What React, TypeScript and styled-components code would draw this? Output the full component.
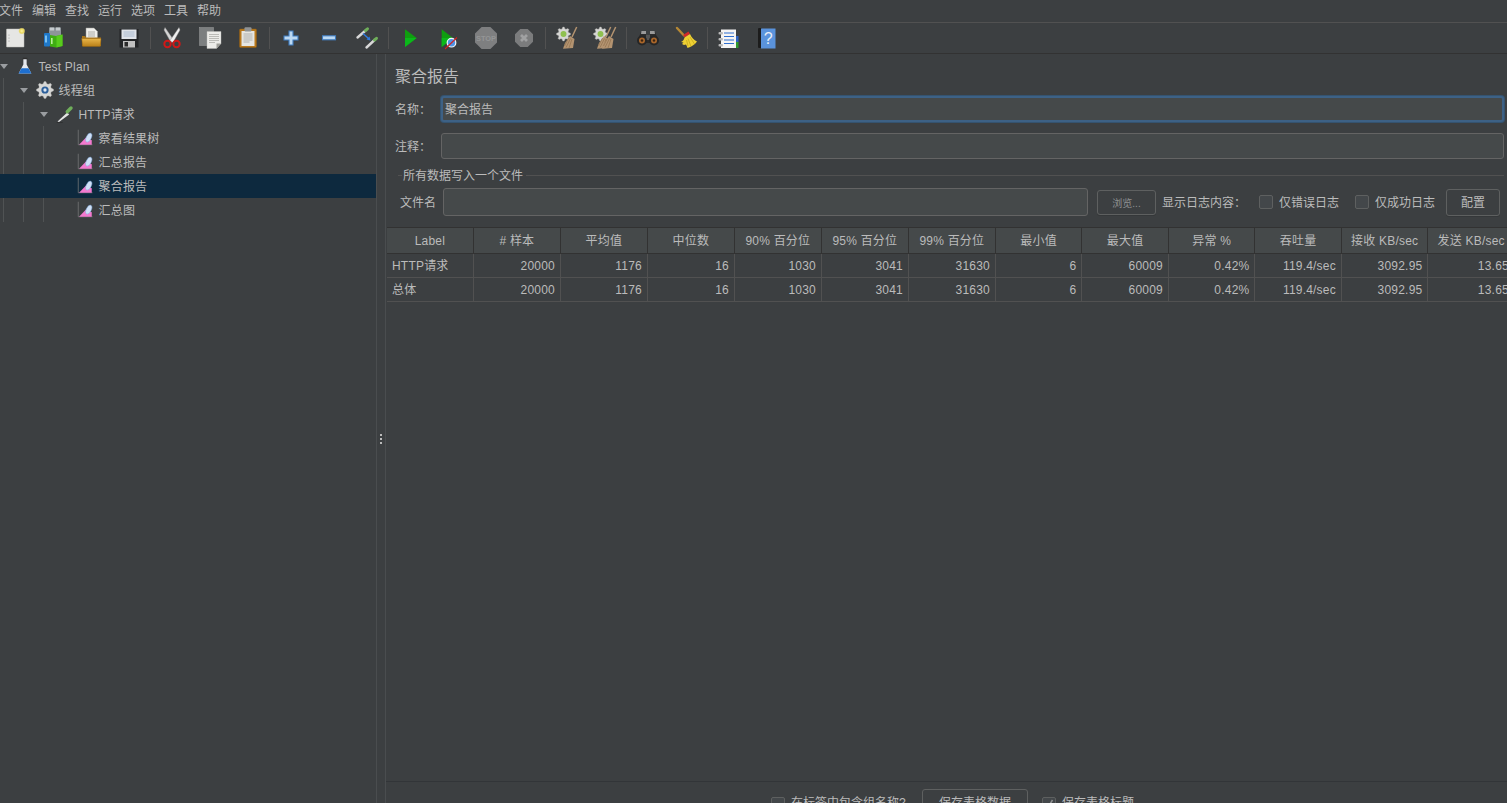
import React, { FC } from 'react'
import styled, { createGlobalStyle } from 'styled-components'

const GlobalStyle = createGlobalStyle`
  html, body {
    margin: 0;
    padding: 0;
    background: #3c3f41;
  }
  * {
    box-sizing: border-box;
  }
`

const APP = styled.div`
  width: 1507px;
  height: 803px;
  overflow: hidden;
  display: flex;
  flex-direction: column;
  background: #3c3f41;
  color: #bbbbbb;
  font-family: 'Liberation Sans', 'Noto Sans CJK SC', sans-serif;
  font-size: 12px;
  line-height: 15px;
`

const MENU = styled.div`
  display: flex;
  height: 23px;
  flex: none;
  padding-top: 4px;
  border-bottom: 1px solid #515151;
`

const MENU_ITEM = styled.div`
  width: 33px;
  &:first-child {
    margin-left: -1px;
  }
`

const TOOLBAR = styled.div`
  display: flex;
  align-items: center;
  height: 31px;
  flex: none;
  border-bottom: 1px solid #323232;
`

const TOOL = styled.div`
  width: 38px;
  height: 24px;
  flex: none;
  display: flex;
  justify-content: center;
  &:first-child {
    margin-left: -4px;
  }
  svg {
    width: 24px;
    height: 24px;
    display: block;
  }
`

const TOOL_SEP = styled.div`
  width: 5px;
  height: 22px;
  flex: none;
  background: linear-gradient(#515151, #515151) no-repeat center / 1px 100%;
`

const BODY = styled.div`
  flex: 1;
  display: flex;
  min-height: 0;
`

const TREE = styled.div`
  width: 376px;
  flex: none;
`

const guideLayers = (guides: number[]) =>
  guides.length
    ? guides.map(x => `linear-gradient(#505354, #505354) no-repeat ${x}px 0 / 1px 100%`).join(', ')
    : 'none'

const ROW = styled.div<{ $depth: number; $guides: number[]; $selected?: boolean }>`
  display: flex;
  align-items: center;
  height: 24px;
  padding-left: ${({ $depth }) => $depth * 20}px;
  background: ${({ $selected, $guides }) => ($selected ? '#0d293e' : guideLayers($guides))};
  svg {
    width: 18px;
    height: 18px;
    flex: none;
    margin-right: 4.5px;
  }
`

const ARROW = styled.span<{ $open?: boolean }>`
  width: 0;
  height: 0;
  flex: none;
  margin-right: 8px;
  border-left: 4px solid transparent;
  border-right: 4px solid transparent;
  border-top: 5px solid ${({ $open }) => ($open ? '#9a9da0' : 'transparent')};
`

const ROW_LABEL = styled.span`
  white-space: nowrap;
  letter-spacing: 0.2px;
  padding-top: 2px;
`

const SPLITTER = styled.div`
  width: 10px;
  flex: none;
  display: flex;
  flex-direction: column;
  align-items: center;
  justify-content: center;
  gap: 2px;
  padding-top: 20px;
  border-left: 1px solid #4a4d4f;
  border-right: 1px solid #4a4d4f;
  span {
    width: 2px;
    height: 2px;
    background: #bbbbbb;
  }
`

const PANEL = styled.div`
  flex: 1;
  min-width: 0;
  display: flex;
  flex-direction: column;
`

const TITLE = styled.div`
  height: 42px;
  flex: none;
  padding: 4px 0 0 9px;
  display: flex;
  align-items: center;
  font-size: 16px;
  line-height: 20px;
`

const FORM_ROW = styled.div<{ $gapBelow?: number }>`
  display: flex;
  align-items: center;
  height: 26px;
  flex: none;
  padding: 0 3px 0 9px;
  margin-bottom: ${({ $gapBelow }) => $gapBelow ?? 0}px;
`

const FORM_LABEL = styled.label`
  width: 46px;
  flex: none;
  padding-top: 2px;
`

const FIELD = styled.div<{ $focused?: boolean }>`
  flex: 1;
  height: 100%;
  padding: 2px 0 0 ${({ $focused }) => ($focused ? 2 : 4)}px;
  display: flex;
  align-items: center;
  background: #45494a;
  border: ${({ $focused }) => ($focused ? '2px solid #3d6185' : '1px solid #646464')};
  border-radius: 3px;
  box-shadow: ${({ $focused }) => ($focused ? '0 0 0 1px #35536f' : 'none')};
`

const GROUP_TITLE = styled.div`
  height: 14px;
  flex: none;
  margin: 9px 3px 6px 12px;
  display: flex;
  align-items: center;
  &::before {
    content: '';
    width: 4px;
    height: 1px;
    background: #515151;
    margin-right: 1px;
  }
  &::after {
    content: '';
    flex: 1;
    height: 1px;
    background: #515151;
    margin-left: 3px;
  }
`

const GROUP_TEXT = styled.span`
  padding-top: 2px;
`

const FILE_ROW = styled.div`
  height: 28px;
  flex: none;
  display: flex;
  align-items: center;
  padding-left: 14px;
`

const FILE_LABEL = styled.label`
  width: 43px;
  flex: none;
  padding-top: 2px;
`

const FILE_FIELD = styled(FIELD)`
  flex: none;
  width: 645px;
  margin-right: 9px;
`

const BROWSE = styled.div`
  width: 59px;
  height: 25px;
  flex: none;
  margin-right: 6px;
  padding-top: 2px;
  display: flex;
  align-items: center;
  justify-content: center;
  font-size: 10px;
  color: #8f9192;
  border: 1px solid #5e6060;
  border-radius: 3px;
  box-shadow: 0 1px 0 #35383a;
`

const CHECK_BOX = styled.span`
  width: 14px;
  height: 14px;
  flex: none;
  display: inline-flex;
  align-items: center;
  justify-content: center;
  background: #43474a;
  border: 1px solid #5e6060;
  border-radius: 2px;
  svg {
    width: 12px;
    height: 12px;
  }
`

const CHECK_ITEM = styled.div<{ $width: number }>`
  width: ${({ $width }) => $width}px;
  flex: none;
  display: flex;
  align-items: center;
  gap: 6px;
  white-space: nowrap;
`

const CHECK_TEXT = styled.span`
  padding-top: 2px;
`

const LOG_LABEL = styled.span`
  width: 97px;
  flex: none;
  padding-top: 2px;
`

const PLAIN_BUTTON = styled.div`
  width: 54px;
  height: 27px;
  flex: none;
  padding-top: 2px;
  display: flex;
  align-items: center;
  justify-content: center;
  border: 1px solid #5e6060;
  border-radius: 3px;
  box-shadow: 0 1px 0 #35383a;
`

const TABLE_WRAP = styled.div`
  margin: 11px 0 0 1px;
  flex: none;
  overflow: hidden;
`

const TABLE = styled.table`
  border-collapse: collapse;
  table-layout: fixed;
  width: 1127.4px;
  th, td {
    padding: 2px 5px 0;
    border-right: 1px solid #515151;
    border-bottom: 1px solid #515151;
    font-weight: normal;
    white-space: nowrap;
    letter-spacing: 0.2px;
  }
  th {
    width: 86.5px;
    height: 26px;
    background: #45494a;
    border-top: 1px solid #323232;
    border-bottom-color: #323232;
    border-right-color: #323232;
    text-align: center;
    overflow: hidden;
  }
  th:nth-child(-n + 7) {
    width: 87px;
  }
  th:first-child {
    width: 86.4px;
  }
  td {
    height: 24px;
    text-align: right;
  }
  td:first-child {
    text-align: left;
  }
`

const SPACER = styled.div`
  flex: 1;
`

const FOOTER = styled.div`
  height: 22px;
  flex: none;
  display: flex;
  align-items: flex-start;
  padding: 7px 0 0 385px;
  border-top: 1px solid #323538;
`

const FOOT_CHECK = styled(CHECK_ITEM)`
  margin-top: 7px;
  ${CHECK_TEXT} {
    padding-top: 0;
  }
`

const FOOT_BUTTON = styled(PLAIN_BUTTON)`
  width: 106px;
  height: 27px;
  margin-right: 14px;
`

type Props = { children?: React.ReactNode }

const Ico: FC<Props> = ({ children }) => <svg viewBox="0 0 24 24">{children}</svg>

const NewIcon = () => (
  <Ico>
    <defs>
      <radialGradient id="glow">
        <stop offset="0" stopColor="#fff6a8" />
        <stop offset="0.6" stopColor="#e8d65c" />
        <stop offset="1" stopColor="#e8d65c" stopOpacity="0" />
      </radialGradient>
    </defs>
    <rect x="3.5" y="3" width="17.5" height="18" rx="0.5" fill="#e6e6e4" stroke="#bdbdb8" strokeWidth="0.5" />
    <circle cx="6" cy="9" r="0.6" fill="#999" />
    <circle cx="6" cy="12" r="0.6" fill="#999" />
    <circle cx="6" cy="15" r="0.6" fill="#999" />
    <circle cx="18.8" cy="5" r="3.6" fill="url(#glow)" />
  </Ico>
)

const TemplatesIcon = () => (
  <Ico>
    <rect x="8" y="1.5" width="12" height="11" fill="#8d9599" />
    <path d="M9 1.5h4v3H9zM15 1.5h4v3h-4z" fill="#c5cbce" />
    <rect x="3" y="7" width="6" height="13.5" rx="1" fill="#1f78c8" />
    <rect x="4" y="9.5" width="2" height="7" fill="#7bc0f0" />
    <path d="M9 9l6 1 6.5-1.5V20l-6.5 1.5-6-1z" fill="#3fae12" />
    <path d="M15.5 10l6-1.5V20l-6 1.5z" fill="#58cc1c" />
    <rect x="10" y="12" width="1.6" height="6" fill="#b7ee9a" />
  </Ico>
)

const OpenIcon = () => (
  <Ico>
    <defs>
      <linearGradient id="folder" x1="0" y1="0" x2="0" y2="1">
        <stop offset="0" stopColor="#e9b64a" />
        <stop offset="1" stopColor="#b97f17" />
      </linearGradient>
    </defs>
    <path d="M7 2h8l3.5 3.5V14H7z" fill="#efefec" stroke="#9a9a94" strokeWidth="0.5" />
    <path d="M9 6h7M9 8h7M9 10h7" stroke="#9c9c98" strokeWidth="0.8" />
    <path d="M3 10h3l1 1.5h15V20H3z" fill="#a8751a" />
    <path d="M2.7 12.5h19.3l-0.8 8H3.700z" fill="url(#folder)" stroke="#946512" strokeWidth="0.5" />
  </Ico>
)

const SaveIcon = () => (
  <Ico>
    <path d="M2.5 3h19v18.5h-19z" fill="#232527" />
    <rect x="4.5" y="3.5" width="15" height="9.5" fill="#dfe3e9" />
    <path d="M6.5 6h11M6.5 8h11M6.5 10h11" stroke="#9db0c8" strokeWidth="0.8" />
    <rect x="6" y="15" width="12" height="6.5" fill="#c0c0c0" />
    <rect x="7.5" y="16" width="3.5" height="4.5" fill="#2a2a2a" />
  </Ico>
)

const CutIcon = () => (
  <Ico>
    <path d="M5 1.5l9 13-3 2L4 4z" fill="#d4d4d4" stroke="#8a8a8a" strokeWidth="0.4" />
    <path d="M19 1.5l-9 13 3 2L20 4z" fill="#efefef" stroke="#8a8a8a" strokeWidth="0.4" />
    <circle cx="7.5" cy="18" r="3.2" fill="none" stroke="#d01818" strokeWidth="2" />
    <circle cx="16.5" cy="18" r="3.2" fill="none" stroke="#d01818" strokeWidth="2" />
  </Ico>
)

const CopyIcon = () => (
  <Ico>
    <rect x="1.5" y="1.5" width="14" height="18" fill="#7c7f80" stroke="#9a9c9c" strokeWidth="0.5" />
    <path d="M9 5.5h14v12l-4.5 5H9z" fill="#ecece9" stroke="#bdbdb8" strokeWidth="0.4" />
    <path d="M18.5 22.5v-5H23z" fill="#9f9f9a" />
    <path d="M11 8.5h10M11 10.5h10M11 12.5h10M11 14.5h10M11 16.5h6" stroke="#a6a6a2" strokeWidth="0.7" />
  </Ico>
)

const PasteIcon = () => (
  <Ico>
    <rect x="3.5" y="3" width="17" height="18.5" rx="1" fill="#b9791d" stroke="#8f5c12" strokeWidth="0.5" />
    <rect x="5.5" y="5" width="13" height="15" fill="#e6e6e2" />
    <rect x="8.5" y="1.2" width="7" height="4.3" rx="1" fill="#8f9294" />
    <path d="M7.5 8h9M7.5 10h9M7.5 12h9M7.5 14h9M7.5 16h6" stroke="#999" strokeWidth="0.7" />
  </Ico>
)

const PlusIcon = () => (
  <Ico>
    <path d="M10 5h4v5h5v4h-5v5h-4v-5H5v-4h5z" fill="#bcd9f3" stroke="#3f7cc0" strokeWidth="1.1" />
  </Ico>
)

const MinusIcon = () => (
  <Ico>
    <rect x="5.5" y="9.8" width="13" height="4" fill="#bcd9f3" stroke="#3f7cc0" strokeWidth="1.1" />
  </Ico>
)

const Dropper: FC<{ d: string; tip: string }> = ({ d, tip }) => (
  <>
    <path d={d} stroke="#d8d8d8" strokeWidth="2.4" strokeLinecap="round" fill="none" />
    <path d={tip} stroke="#6fae5a" strokeWidth="3" strokeLinecap="round" fill="none" />
  </>
)

const ToggleIcon = () => (
  <Ico>
    <Dropper d="M2.5 11.5L10 5" tip="M10.5 4.5L12.5 2.8" />
    <Dropper d="M11.5 21.5L19 14.5" tip="M19.5 14L21.5 12.3" />
    <path d="M8 7.5l5.5 5" stroke="#2f7be0" strokeWidth="1.4" />
    <path d="M15.5 14.5l-1-4-3 3z" fill="#2f7be0" />
  </Ico>
)

const RunIcon = () => (
  <Ico>
    <path d="M7 3.3L18.7 12 7 21z" fill="#0f9e0f" />
    <path d="M7 12h11.7L7 21z" fill="#0bb81a" />
  </Ico>
)

const RunNoTimersIcon = () => (
  <Ico>
    <path d="M5.7 3.3L17 12 5.7 21z" fill="#0f9e0f" />
    <path d="M5.7 12H17L5.7 21z" fill="#0bb81a" />
    <circle cx="15.5" cy="16.7" r="4.3" fill="#4f94e6" stroke="#f2f6fb" strokeWidth="1.2" />
    <path d="M9 23L21 11.5" stroke="#d42020" strokeWidth="1.1" />
  </Ico>
)

const StopIcon = () => (
  <Ico>
    <path d="M7.6 1h8.8L23 7.6v8.8L16.4 23H7.6L1 16.4V7.6z" fill="#7e7f80" />
    <text x="12" y="14.7" textAnchor="middle" fontSize="7.4" fontWeight="bold" fontFamily="Liberation Sans" fill="#949596">
      STOP
    </text>
  </Ico>
)

const ShutdownIcon = () => (
  <Ico>
    <path d="M8.3 3h7.4l5.3 5.3v7.4L15.7 21H8.3L3 15.7V8.3z" fill="#7b7c7d" />
    <path d="M9 9l6 6M15 9l-6 6" stroke="#a0a1a2" strokeWidth="2.8" />
  </Ico>
)

// outline of a toothed wheel
const gearPath = (cx: number, cy: number, r: number, teeth: number) => {
  const step = (Math.PI * 2) / (teeth * 4)
  const points: string[] = []
  for (let i = 0; i < teeth * 4; i++) {
    const radius = i % 4 < 2 ? r : r * 0.76
    const a = (i - 0.5) * step
    points.push(`${(cx + radius * Math.cos(a)).toFixed(2)} ${(cy + radius * Math.sin(a)).toFixed(2)}`)
  }
  return `M${points.join('L')}z`
}

const Gear: FC<{ cx: number; cy: number; r: number; hub: string }> = ({ cx, cy, r, hub }) => (
  <>
    <path d={gearPath(cx, cy, r, 8)} fill="#d6d6d4" stroke="#a8a8a6" strokeWidth="0.4" />
    <circle cx={cx} cy={cy} r={r * 0.42} fill={hub} />
  </>
)

const Broom: FC<{ x: number }> = ({ x }) => (
  <g transform={`translate(${x} 0)`}>
    <path d="M21.7 1L17 11" stroke="#b39370" strokeWidth="1.5" />
    <path d="M15 10l4.5 3L18 22l-10 .8 2-5.800z" fill="#b39370" />
    <path d="M11 21.5l4.5-9M14 22l3-9M9.5 20l4-8" stroke="#8c6b48" strokeWidth="0.6" />
  </g>
)

const ClearIcon = () => (
  <Ico>
    <Gear cx={8.5} cy={8} r={7} hub="#8fc04f" />
    <Broom x={0} />
  </Ico>
)

const ClearAllIcon = () => (
  <Ico>
    <Gear cx={7.5} cy={8} r={7} hub="#8fc04f" />
    <Broom x={-4} />
    <Broom x={1} />
  </Ico>
)

const BinocularsIcon = () => (
  <Ico>
    <path d="M2 13l3-7h5v3h4V6h5l3 7v4H2z" fill="#2b2b2b" />
    <path d="M5.5 5h4.5v3H5zM14 5h4.5L19 8h-5z" fill="#9a9a9a" />
    <rect x="10" y="9" width="4" height="5" fill="#555" />
    <circle cx="6" cy="14.5" r="5" fill="#262626" />
    <circle cx="18" cy="14.5" r="5" fill="#262626" />
    <circle cx="6" cy="14.5" r="3" fill="#a9662a" />
    <circle cx="18" cy="14.5" r="3" fill="#a9662a" />
    <circle cx="6" cy="14.5" r="1.2" fill="#3a2413" />
    <circle cx="18" cy="14.5" r="1.2" fill="#3a2413" />
  </Ico>
)

const BroomIcon = () => (
  <Ico>
    <path d="M3 2l7 7.5" stroke="#b58835" strokeWidth="2.4" strokeLinecap="round" />
    <path d="M9 9l5.5-3.5 1.5 2.5-5 3.500z" fill="#cf2a2a" />
    <path d="M10.5 11.5l5.5-3.500c1.500 3.500 4 6 7 7.500-2 3-6 5.500-9.500 6.500-.5-1.500-1-2.500-1.500-3.500l-2 .5-2-1 1.500-1.500-2.500-.5c2-1 3-2.500 3.500-4.500z" fill="#eed033" />
    <path d="M14 12.5l3 8M12.5 14l1.5 6M16 11l4.5 7" stroke="#b79c14" strokeWidth="0.6" />
  </Ico>
)

const NotebookIcon = () => (
  <Ico>
    <rect x="4" y="3.5" width="15" height="18.5" fill="#f4f4f4" />
    <rect x="19" y="10" width="2.5" height="6" fill="#2d62c0" />
    <rect x="19" y="16" width="2.5" height="6" fill="#2e9a2e" />
    <path d="M7 7h10M7 10.5h10M7 14h10M7 17.5h10" stroke="#2f6fd0" strokeWidth="1.1" />
    <rect x="1.5" y="6" width="4.5" height="2.4" rx="1" fill="#b9b9b9" />
    <rect x="1.5" y="12" width="4.5" height="2.4" rx="1" fill="#b9b9b9" />
    <rect x="1.5" y="18" width="4.5" height="2.4" rx="1" fill="#b9b9b9" />
  </Ico>
)

const HelpIcon = () => (
  <Ico>
    <rect x="3" y="2" width="4" height="20" rx="1" fill="#1c1c1c" />
    <rect x="6" y="2.5" width="14.5" height="20" fill="#5a93dc" />
    <text x="13.2" y="18" textAnchor="middle" fontSize="16" fontFamily="Liberation Sans" fill="#e8eef6">
      ?
    </text>
  </Ico>
)

const FlaskIcon = () => (
  <Ico>
    <rect x="9" y="1" width="6" height="2.5" fill="#2e2e2e" />
    <path d="M9.8 3h4.400v7l6.300 12H3.500L9.800 10z" fill="#e6e9ee" />
    <path d="M7.300 15h9.400l3.800 7H3.500z" fill="#1e6fd0" />
  </Ico>
)

const GearIcon = () => (
  <Ico>
    <Gear cx={12} cy={12} r={11.5} hub="#2c5f9a" />
    <circle cx="12" cy="12" r="2.2" fill="#dce6f2" />
  </Ico>
)

const DropperIcon = () => (
  <Ico>
    <path d="M1 23.5h8" stroke="#2a2a2a" strokeWidth="1" />
    <path d="M2 22l13-12 2.500 2.500L4 22.500z" fill="#e4e4e4" />
    <path d="M15 9l5-5" stroke="#6fae5a" strokeWidth="4.6" strokeLinecap="round" />
  </Ico>
)

const ChartIcon = () => (
  <Ico>
    <path d="M3 1v20h19" stroke="#77797a" strokeWidth="1" fill="none" />
    <path d="M4.400 20.700L13.300 11.300 21 15v6H4.400z" fill="#f47ad0" />
    <ellipse cx="17" cy="11.500" rx="3.300" ry="6.500" transform="rotate(25 17 11.500)" fill="#cfe0f7" stroke="#7fa8dc" strokeWidth="0.6" />
  </Ico>
)

const TickIcon = () => (
  <svg viewBox="0 0 12 12">
    <path d="M2.500 6.500l2.500 3L9.500 2" stroke="#8f9192" strokeWidth="1.5" fill="none" />
  </svg>
)

const MENU_ITEMS = ['文件', '编辑', '查找', '运行', '选项', '工具', '帮助']

const TOOL_GROUPS = [
  [NewIcon, TemplatesIcon, OpenIcon, SaveIcon],
  [CutIcon, CopyIcon, PasteIcon],
  [PlusIcon, MinusIcon, ToggleIcon],
  [RunIcon, RunNoTimersIcon, StopIcon, ShutdownIcon],
  [ClearIcon, ClearAllIcon],
  [BinocularsIcon, BroomIcon],
  [NotebookIcon, HelpIcon],
]

const TREE_ROWS = [
  { label: 'Test Plan', depth: 0, guides: [], icon: FlaskIcon, open: true },
  { label: '线程组', depth: 1, guides: [3], icon: GearIcon, open: true },
  { label: 'HTTP请求', depth: 2, guides: [3, 23], icon: DropperIcon, open: true },
  { label: '察看结果树', depth: 3, guides: [3, 23, 43], icon: ChartIcon },
  { label: '汇总报告', depth: 3, guides: [3, 23, 43], icon: ChartIcon },
  { label: '聚合报告', depth: 3, guides: [3, 23, 43], icon: ChartIcon, selected: true },
  { label: '汇总图', depth: 3, guides: [3, 23, 43], icon: ChartIcon },
]

const COLUMNS = ['Label', '# 样本', '平均值', '中位数', '90% 百分位', '95% 百分位', '99% 百分位', '最小值', '最大值', '异常 %', '吞吐量', '接收 KB/sec', '发送 KB/sec']
const VALUES = ['20000', '1176', '16', '1030', '3041', '31630', '6', '60009', '0.42%', '119.4/sec', '3092.95', '13.65']
const RESULT_ROWS = ['HTTP请求', '总体']

export default function App() {
  return (
    <APP>
      <GlobalStyle />
      <MENU>
        {MENU_ITEMS.map(item => (
          <MENU_ITEM key={item}>{item}</MENU_ITEM>
        ))}
      </MENU>
      <TOOLBAR>
        {TOOL_GROUPS.map((group, i) => (
          <React.Fragment key={i}>
            {i > 0 && <TOOL_SEP />}
            {group.map((Icon, j) => (
              <TOOL key={j}>
                <Icon />
              </TOOL>
            ))}
          </React.Fragment>
        ))}
      </TOOLBAR>
      <BODY>
        <TREE>
          {TREE_ROWS.map(row => (
            <ROW key={row.label} $depth={row.depth} $guides={row.guides} $selected={row.selected}>
              <ARROW $open={row.open} />
              <row.icon />
              <ROW_LABEL>{row.label}</ROW_LABEL>
            </ROW>
          ))}
        </TREE>
        <SPLITTER>
          <span />
          <span />
          <span />
        </SPLITTER>
        <PANEL>
          <TITLE>聚合报告</TITLE>
          <FORM_ROW $gapBelow={11}>
            <FORM_LABEL>名称：</FORM_LABEL>
            <FIELD $focused>聚合报告</FIELD>
          </FORM_ROW>
          <FORM_ROW>
            <FORM_LABEL>注释：</FORM_LABEL>
            <FIELD />
          </FORM_ROW>
          <GROUP_TITLE>
            <GROUP_TEXT>所有数据写入一个文件</GROUP_TEXT>
          </GROUP_TITLE>
          <FILE_ROW>
            <FILE_LABEL>文件名</FILE_LABEL>
            <FILE_FIELD />
            <BROWSE>浏览...</BROWSE>
            <LOG_LABEL>显示日志内容：</LOG_LABEL>
            <CHECK_ITEM $width={96}>
              <CHECK_BOX />
              <CHECK_TEXT>仅错误日志</CHECK_TEXT>
            </CHECK_ITEM>
            <CHECK_ITEM $width={91}>
              <CHECK_BOX />
              <CHECK_TEXT>仅成功日志</CHECK_TEXT>
            </CHECK_ITEM>
            <PLAIN_BUTTON>配置</PLAIN_BUTTON>
          </FILE_ROW>
          <TABLE_WRAP>
            <TABLE>
              <thead>
                <tr>
                  {COLUMNS.map(col => (
                    <th key={col}>{col}</th>
                  ))}
                </tr>
              </thead>
              <tbody>
                {RESULT_ROWS.map(name => (
                  <tr key={name}>
                    <td>{name}</td>
                    {VALUES.map((value, i) => (
                      <td key={i}>{value}</td>
                    ))}
                  </tr>
                ))}
              </tbody>
            </TABLE>
          </TABLE_WRAP>
          <SPACER />
          <FOOTER>
            <FOOT_CHECK $width={151}>
              <CHECK_BOX />
              <CHECK_TEXT>在标签中包含组名称?</CHECK_TEXT>
            </FOOT_CHECK>
            <FOOT_BUTTON>保存表格数据</FOOT_BUTTON>
            <FOOT_CHECK $width={100}>
              <CHECK_BOX>
                <TickIcon />
              </CHECK_BOX>
              <CHECK_TEXT>保存表格标题</CHECK_TEXT>
            </FOOT_CHECK>
          </FOOTER>
        </PANEL>
      </BODY>
    </APP>
  )
}
